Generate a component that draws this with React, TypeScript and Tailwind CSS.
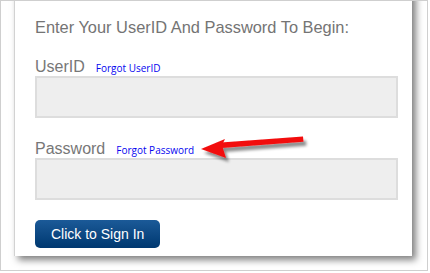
import React from 'react';

const ArrowPointer = () => (
  <svg
    className="absolute left-[190px] top-[126px] pointer-events-none"
    width="130"
    height="44"
    viewBox="0 0 130 44"
  >
    <defs>
      <filter id="arrowShadow" x="-20%" y="-40%" width="140%" height="180%">
        <feGaussianBlur in="SourceAlpha" stdDeviation="1.6" />
        <feOffset dx="3" dy="4" result="blur" />
        <feComponentTransfer>
          <feFuncA type="linear" slope="0.45" />
        </feComponentTransfer>
        <feMerge>
          <feMergeNode />
          <feMergeNode in="SourceGraphic" />
        </feMerge>
      </filter>
    </defs>
    <g filter="url(#arrowShadow)">
      <path d="M30 15.6 L112 9.6 L112.5 14.8 L30.6 21 Z" fill="#f20d0d" />
      <path d="M10 22 L34 12 L31 18.3 L35 31 Z" fill="#f20d0d" />
    </g>
  </svg>
);

const Field = ({ label, link }: { label: string; link: string }) => (
  <div>
    <div className="flex items-baseline">
      <span className="text-[16px] leading-[18px] text-[#777777]">{label}</span>
      <a
        href="#"
        className="ml-[11px] text-[10px] text-[#0606f0] no-underline"
        style={{ fontFamily: '"Open Sans", "Noto Sans", sans-serif' }}
      >
        {link}
      </a>
    </div>
    <input
      type="text"
      className="block w-[363px] h-[42px] bg-[#eeeeee] border-2 border-[#dddddd] outline-none"
    />
  </div>
);

export default function App() {
  return (
    <div
      className="relative w-[428px] h-[271px] border border-[#cfcfcf] overflow-hidden bg-white"
      style={{ fontFamily: '"Liberation Sans", Arial, sans-serif' }}
    >
      <div className="-mt-[10px] ml-[13px] w-[398px] h-[265px] bg-white border-l border-[#d2d2d2] shadow-[4px_4px_7px_rgba(0,0,0,0.5)] pt-[26px] pl-[20px]">
        <h1 className="text-[16.4px] leading-[20px] text-[#747474]">
          Enter Your UserID And Password To Begin:
        </h1>
        <div className="mt-[21px] flex flex-col gap-[22px]">
          <Field label="UserID" link="Forgot UserID" />
          <Field label="Password" link="Forgot Password" />
        </div>
        <button className="mt-[20px] h-[28px] px-4 rounded-[5px] bg-gradient-to-b from-[#1b5a98] to-[#003870] text-white text-[14px] leading-[28px]">
          Click to Sign In
        </button>
      </div>
      <ArrowPointer />
    </div>
  );
}
